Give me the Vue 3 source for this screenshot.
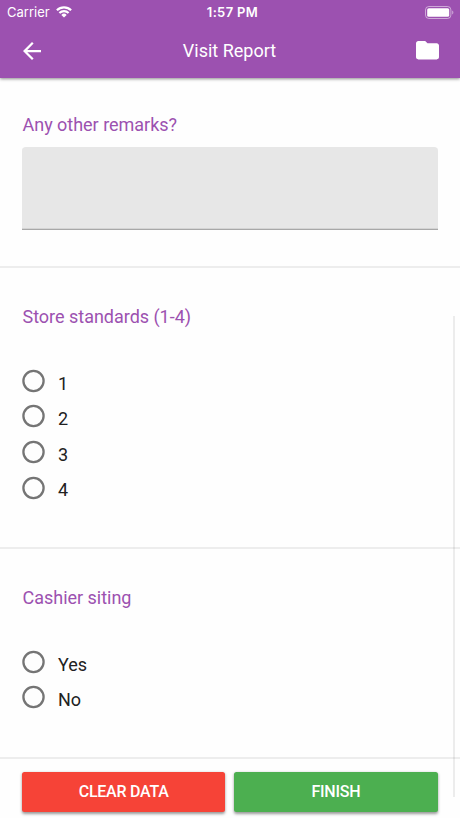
<template>
  <div class="report-page">
    <header class="app-header">
      <div class="status-bar">
        <div class="carrier">
          <span>Carrier</span>
          <svg class="wifi" viewBox="0 0 16 12" width="16" height="12">
            <path d="M.9 4.2a10.2 10.2 0 0 1 14.2 0" />
            <path d="M3.4 7a6.6 6.6 0 0 1 9.2 0" />
            <path class="dot" d="M8 11.6 5.3 8.9a3.9 3.9 0 0 1 5.4 0z" />
          </svg>
        </div>
        <span class="clock">1:57 PM</span>
        <div class="battery">
          <svg viewBox="0 0 29 13" width="29" height="13">
            <rect class="shell" x=".5" y=".5" width="25.4" height="12" rx="3.4" />
            <rect class="charge" x="2.2" y="2.2" width="22" height="8.6" rx="1.6" />
            <path class="cap" d="M27.2 4.5c1.6.5 1.6 3.5 0 4z" />
          </svg>
        </div>
      </div>
      <div class="toolbar">
        <button class="icon-btn" aria-label="Back">
          <svg viewBox="4 4 16 16" width="18" height="18">
            <path d="M20 11H7.83l5.59-5.59L12 4l-8 8 8 8 1.41-1.41L7.83 13H20v-2z" />
          </svg>
        </button>
        <h1>Visit Report</h1>
        <button class="icon-btn" aria-label="Files">
          <svg viewBox="2 4 20 16" width="23" height="18.4">
            <path d="M10 4H4c-1.1 0-1.99.9-1.99 2L2 18c0 1.1.9 2 2 2h16c1.1 0 2-.9 2-2V8c0-1.1-.9-2-2-2h-8l-2-2z" />
          </svg>
        </button>
      </div>
    </header>

    <main>
      <section class="question remarks">
        <h2>Any other remarks?</h2>
        <textarea v-model="remarks"></textarea>
      </section>

      <section v-for="q in questions" :key="q.id" class="question" :class="q.id">
        <h2>{{ q.title }}</h2>
        <div class="options">
          <label v-for="opt in q.options" :key="opt" class="option">
            <input type="radio" :name="q.id" :value="opt" v-model="answers[q.id]" />
            <svg class="radio" viewBox="0 0 24 24" width="24" height="24">
              <circle class="ring" cx="11.5" cy="12" r="10.1" />
              <circle class="mark" cx="11.5" cy="12" r="5.5" />
            </svg>
            <span>{{ opt }}</span>
          </label>
        </div>
      </section>
    </main>

    <footer class="actions">
      <button class="btn clear" @click="clearData">CLEAR DATA</button>
      <button class="btn finish">FINISH</button>
    </footer>

    <div class="scroll-thumb"></div>
  </div>
</template>

<script setup>
import { ref } from 'vue';

const questions = [
  { id: 'standards', title: 'Store standards (1-4)', options: ['1', '2', '3', '4'] },
  { id: 'cashier', title: 'Cashier siting', options: ['Yes', 'No'] }
];

const remarks = ref('');
const answers = ref({ standards: null, cashier: null });

const clearData = () => {
  remarks.value = '';
  answers.value = { standards: null, cashier: null };
};
</script>

<style>
body { background: #fefefe; }
</style>

<style scoped>
.report-page {
  position: relative; display: flex; flex-direction: column;
  height: 818px; overflow: hidden; background: #fefefe;
  font-family: Roboto, sans-serif; color: #212121;
}
.report-page * { box-sizing: border-box; }
h1, h2 { margin: 0; font-weight: 400; }
button { border: none; font-family: inherit; cursor: pointer; }

.app-header {
  height: 78px; flex: none; background: #9c51b0; color: #fff;
  box-shadow: 0 1px 3px rgba(0,0,0,0.45);
}
.status-bar {
  display: grid; grid-template-columns: 1fr auto 1fr; align-items: center;
  height: 24px; padding: 0 6px 0 7px;
  font-family: Inter, sans-serif; font-size: 13px;
}
.carrier { display: flex; align-items: center; gap: 6px; }
.wifi path { fill: none; stroke: #fff; stroke-width: 2.2; }
.wifi .dot { fill: #fff; stroke: none; }
.clock { padding-left: 4px; font-weight: 600; letter-spacing: 0.35px; }
.battery { display: flex; justify-content: flex-end; }
.shell { fill: none; stroke: #fff; stroke-opacity: 0.5; }
.charge { fill: #fff; }
.cap { fill: #fff; fill-opacity: 0.5; }

.toolbar {
  display: grid; grid-template-columns: 1fr auto 1fr; align-items: center;
  height: 53px; padding: 0 21px 0 23px;
}
.toolbar h1 { padding-right: 3px; font-size: 18px; line-height: 24px; }
.icon-btn { display: flex; padding: 0; background: none; }
.icon-btn:last-child { justify-content: flex-end; }
.icon-btn svg { fill: #fff; }

.question { padding: 35px 22.5px 0 22px; border-bottom: 2px solid #ededed; }
.question h2 { padding-left: 0.5px; font-size: 18px; line-height: 24px; letter-spacing: -0.02px; color: #9c51b0; }
.remarks { height: 190px; }
.standards { height: 281px; padding-top: 37px; }
.cashier { height: 210px; padding-top: 37px; }

textarea {
  display: block; width: 100%; height: 83px; margin-top: 10px; padding: 12px;
  border: none; border-bottom: 1px solid #a8a8a8; border-radius: 4px 4px 0 0;
  background: #e7e7e7; box-shadow: inset 0 -1px 0 #d4d4d4;
  font: inherit; resize: none; outline: none;
}

.options { margin-top: 34px; }
.option { display: flex; align-items: center; height: 35.6px; font-size: 18px; }
.option input { appearance: none; width: 0; height: 0; margin: 0; }
.radio { flex: none; margin-right: 12px; }
.ring { fill: none; stroke: #757575; stroke-width: 2.3; }
.mark { fill: none; }
.option input:checked + .radio .ring { stroke: #9c51b0; }
.option input:checked + .radio .mark { fill: #9c51b0; }
.option span { padding-top: 4.5px; }

.actions { display: flex; gap: 9px; padding: 13px 22.5px 0 22px; }
.btn {
  flex: 1; height: 40px; padding: 0 0 1px; border-radius: 2.5px; color: #fff;
  font-size: 16px; font-weight: 500; letter-spacing: -0.25px;
  box-shadow: 0 1.5px 3px rgba(0,0,0,0.4);
}
.clear { background: #f64337; }
.finish { background: #4caf50; }

.scroll-thumb {
  position: absolute; top: 316px; right: 5px; width: 2px; height: 481px;
  background: rgba(0,0,0,0.07);
}
</style>
